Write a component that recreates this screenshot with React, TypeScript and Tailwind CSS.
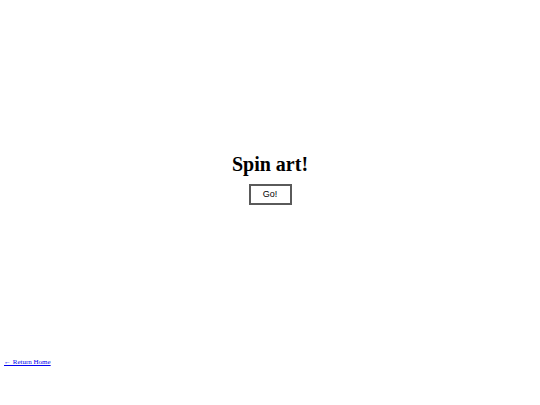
export default function App() {
  return (
    <div className="h-[405px] w-full bg-white flex flex-col font-['Liberation_Serif',serif]">
      <div className="pt-[153px] flex flex-col items-center">
        <h1 className="text-[20px] leading-[23px] font-bold text-black">Spin art!</h1>
        <button className="mt-[8px] w-[43px] h-[21px] border-2 border-[#5a5a5a] bg-white text-[9px] text-black flex items-center justify-center font-['Liberation_Sans',Arial,sans-serif]">
          Go!
        </button>
      </div>
      <div className="mt-[142px] pl-[4px]">
        <a href="#" className="text-[7px] leading-[8px] text-[#0000ee] underline">
          ← Return Home
        </a>
      </div>
    </div>
  )
}
